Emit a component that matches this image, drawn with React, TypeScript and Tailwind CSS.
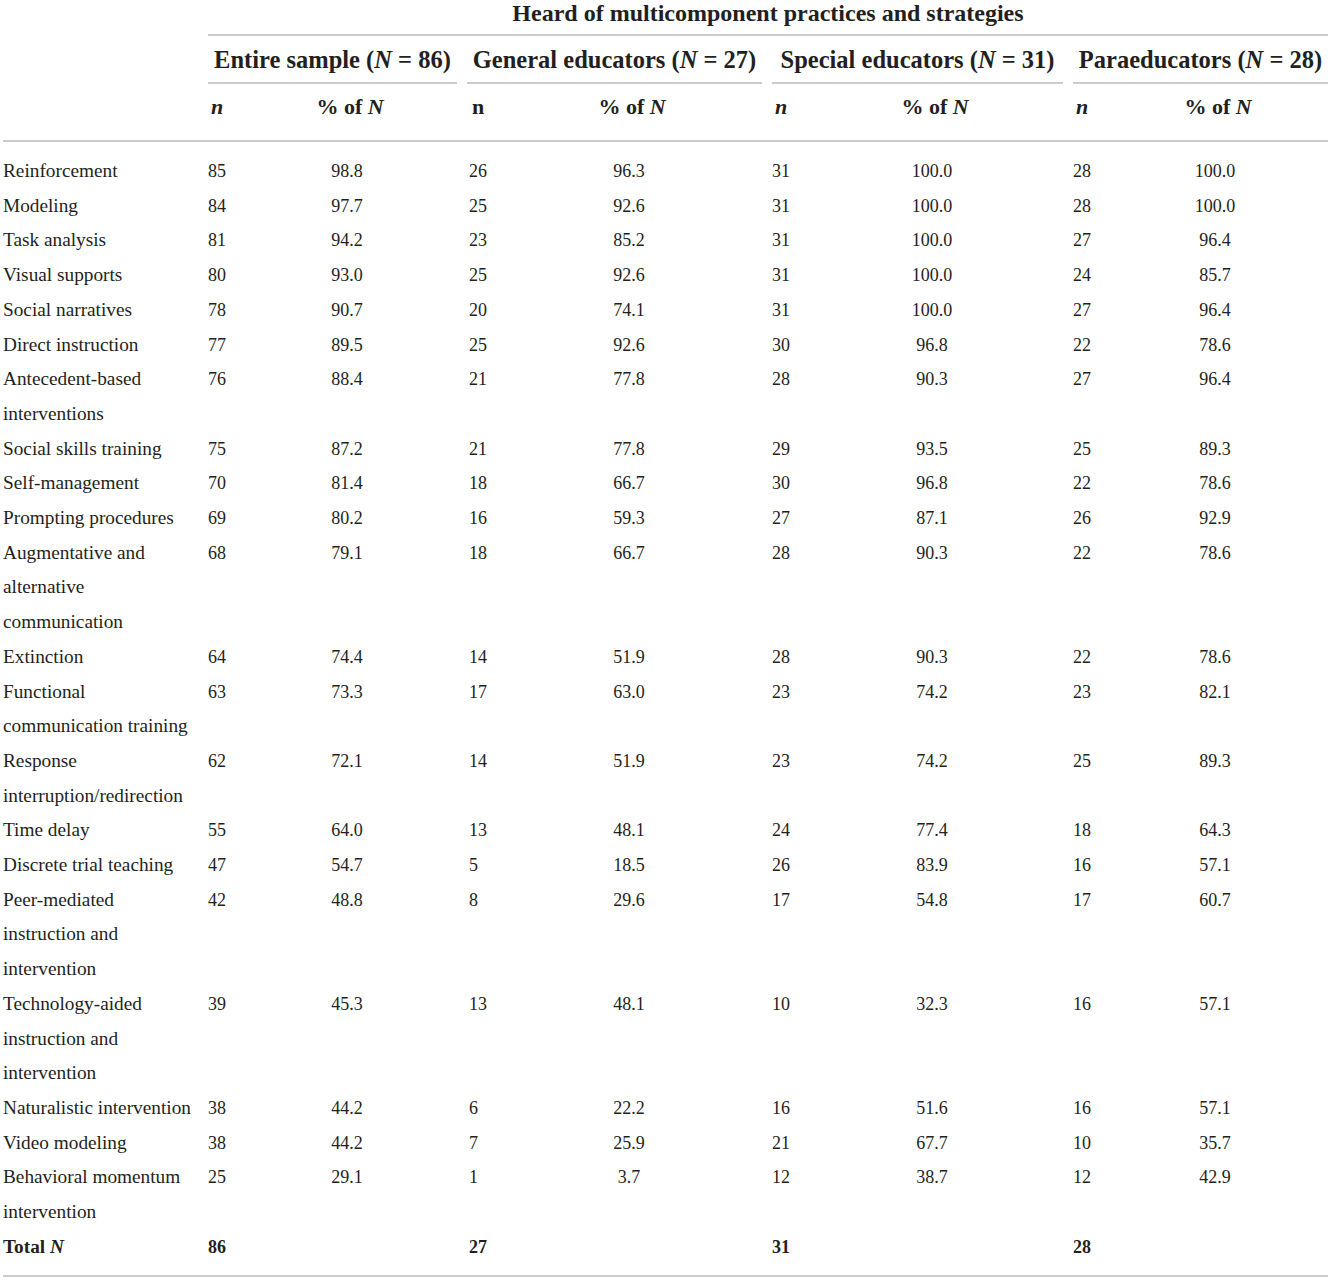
import React from "react";

type Row = {
  label: string[];
  vals: [number, string, number, string, number, string, number, string];
};

const rows: Row[] = [
  { label: ["Reinforcement"], vals: [85, "98.8", 26, "96.3", 31, "100.0", 28, "100.0"] },
  { label: ["Modeling"], vals: [84, "97.7", 25, "92.6", 31, "100.0", 28, "100.0"] },
  { label: ["Task analysis"], vals: [81, "94.2", 23, "85.2", 31, "100.0", 27, "96.4"] },
  { label: ["Visual supports"], vals: [80, "93.0", 25, "92.6", 31, "100.0", 24, "85.7"] },
  { label: ["Social narratives"], vals: [78, "90.7", 20, "74.1", 31, "100.0", 27, "96.4"] },
  { label: ["Direct instruction"], vals: [77, "89.5", 25, "92.6", 30, "96.8", 22, "78.6"] },
  { label: ["Antecedent-based", "interventions"], vals: [76, "88.4", 21, "77.8", 28, "90.3", 27, "96.4"] },
  { label: ["Social skills training"], vals: [75, "87.2", 21, "77.8", 29, "93.5", 25, "89.3"] },
  { label: ["Self-management"], vals: [70, "81.4", 18, "66.7", 30, "96.8", 22, "78.6"] },
  { label: ["Prompting procedures"], vals: [69, "80.2", 16, "59.3", 27, "87.1", 26, "92.9"] },
  { label: ["Augmentative and", "alternative", "communication"], vals: [68, "79.1", 18, "66.7", 28, "90.3", 22, "78.6"] },
  { label: ["Extinction"], vals: [64, "74.4", 14, "51.9", 28, "90.3", 22, "78.6"] },
  { label: ["Functional", "communication training"], vals: [63, "73.3", 17, "63.0", 23, "74.2", 23, "82.1"] },
  { label: ["Response", "interruption/redirection"], vals: [62, "72.1", 14, "51.9", 23, "74.2", 25, "89.3"] },
  { label: ["Time delay"], vals: [55, "64.0", 13, "48.1", 24, "77.4", 18, "64.3"] },
  { label: ["Discrete trial teaching"], vals: [47, "54.7", 5, "18.5", 26, "83.9", 16, "57.1"] },
  { label: ["Peer-mediated", "instruction and", "intervention"], vals: [42, "48.8", 8, "29.6", 17, "54.8", 17, "60.7"] },
  { label: ["Technology-aided", "instruction and", "intervention"], vals: [39, "45.3", 13, "48.1", 10, "32.3", 16, "57.1"] },
  { label: ["Naturalistic intervention"], vals: [38, "44.2", 6, "22.2", 16, "51.6", 16, "57.1"] },
  { label: ["Video modeling"], vals: [38, "44.2", 7, "25.9", 21, "67.7", 10, "35.7"] },
  { label: ["Behavioral momentum", "intervention"], vals: [25, "29.1", 1, "3.7", 12, "38.7", 12, "42.9"] },
];

const grid = "grid grid-cols-[205px_27px_230px_29px_276px_29px_272px_31px_232px]";

// left padding of each "n" column, matched to the reference
const nPad = ["pl-[3px]", "pl-[7px]", "pl-[5px]", "pl-[5px]"];

function GroupHead({ title, n, cls }: { title: string; n: number; cls: string }) {
  return (
    <div className={`col-span-2 border-b-2 border-[#cccccc] pt-[10px] pb-[8px] text-center text-[24.5px] font-bold leading-[28px] whitespace-nowrap ${cls}`}>
      {title} (<i>N</i> = {n})
    </div>
  );
}

function SubHead() {
  return (
    <>
      {[0, 1, 2, 3].map((g) => (
        <React.Fragment key={g}>
          <div className={`${nPad[g]} font-bold`}>{g === 1 ? "n" : <i>n</i>}</div>
          <div className="text-center font-bold">
            % of <i>N</i>
          </div>
        </React.Fragment>
      ))}
    </>
  );
}

export default function App() {
  return (
    <div className="w-[1331px] bg-white pb-[6px] font-['Liberation_Serif',serif] text-[#231f20]">
      {/* header */}
      <div className={grid}>
        <div />
        <div className="col-span-8 mx-[3px] border-b-2 border-[#cccccc] pb-[8px] pt-0 text-center text-[24px] font-bold leading-[26px]">
          Heard of multicomponent practices and strategies
        </div>

        <div />
        <GroupHead title="Entire sample" n={86} cls="ml-[3px] mr-[5px]" />
        <GroupHead title="General educators" n={27} cls="mx-[5px]" />
        <GroupHead title="Special educators" n={31} cls="mx-[5px]" />
        <GroupHead title="Paraeducators" n={28} cls="ml-[5px] mr-[3px]" />
      </div>

      <div className={`${grid} mr-[3px] ml-[3px] border-b-2 border-[#cccccc] pt-[10px] pb-[20px] text-[22px] leading-[26px]`}>
        <div className="-ml-[3px]" />
        <SubHead />
      </div>

      {/* body */}
      <div className="pt-[12px] pb-[10px] mx-[3px] border-b-2 border-[#cccccc]">
        {rows.map((r, i) => (
          <div key={i} className={`${grid} -ml-[3px] leading-[34.7px]`}>
            <div className="pl-[3px] text-[19.3px] whitespace-nowrap">
              {r.label.map((l, j) => (
                <React.Fragment key={j}>
                  {j > 0 && <br />}
                  {l}
                </React.Fragment>
              ))}
            </div>
            {r.vals.map((v, j) => (
              <div key={j} className={`text-[18px] ${j % 2 === 0 ? nPad[j / 2] : "text-center"}`}>
                {v}
              </div>
            ))}
          </div>
        ))}
        <div className={`${grid} -ml-[3px] leading-[34.7px] font-bold`}>
          <div className="pl-[3px] text-[19.3px]">
            Total <i>N</i>
          </div>
          <div className={`${nPad[0]} text-[18px]`}>86</div>
          <div />
          <div className={`${nPad[1]} text-[18px]`}>27</div>
          <div />
          <div className={`${nPad[2]} text-[18px]`}>31</div>
          <div />
          <div className={`${nPad[3]} text-[18px]`}>28</div>
          <div />
        </div>
      </div>
    </div>
  );
}
